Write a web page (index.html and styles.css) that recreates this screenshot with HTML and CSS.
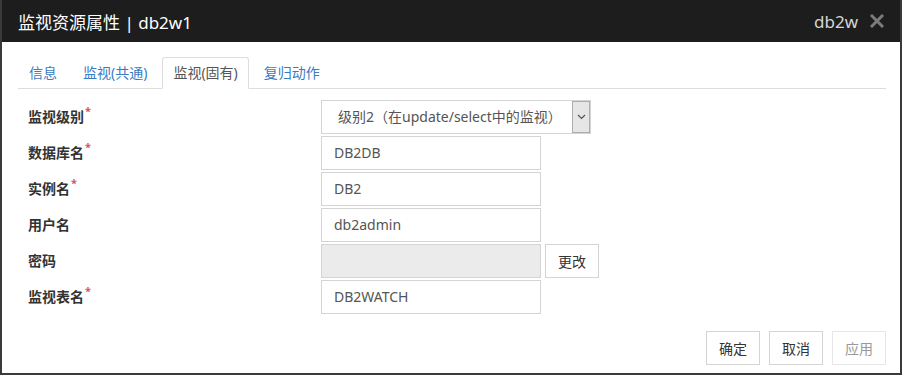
FILE: index.html
```html
<!DOCTYPE html>
<html lang="zh-CN">
<head>
    <meta charset="UTF-8">
    <title>监视资源属性</title>
    <link rel="stylesheet" href="styles.css">
</head>
<body>
    <div class="dialog">
        <div class="dialog-header">
            <div class="dialog-title">监视资源属性 | db2w1</div>
            <div class="dialog-tools">
                <span class="type-name">db2w</span>
                <svg class="close-icon" width="14" height="14" viewBox="0 0 14 14">
                    <path d="M2 2 L12 12 M12 2 L2 12" stroke="#7b7b7b" stroke-width="3" stroke-linecap="square"/>
                </svg>
            </div>
        </div>

        <div class="dialog-body">
            <ul class="tabs">
                <li class="tab">信息</li>
                <li class="tab">监视(共通)</li>
                <li class="tab active">监视(固有)</li>
                <li class="tab">复归动作</li>
            </ul>

            <div class="form">
                <div class="row">
                    <label class="label">监视级别<span class="req">*</span></label>
                    <div class="select">
                        <span class="select-text">级别2（在update/select中的监视）</span>
                        <span class="select-arrow">
                            <svg width="9" height="6" viewBox="0 0 9 6">
                                <path d="M1 1 L4.5 4.5 L8 1" fill="none" stroke="#555" stroke-width="1.2"/>
                            </svg>
                        </span>
                    </div>
                </div>
                <div class="row">
                    <label class="label">数据库名<span class="req">*</span></label>
                    <div class="input">DB2DB</div>
                </div>
                <div class="row">
                    <label class="label">实例名<span class="req">*</span></label>
                    <div class="input">DB2</div>
                </div>
                <div class="row">
                    <label class="label">用户名</label>
                    <div class="input">db2admin</div>
                </div>
                <div class="row">
                    <label class="label">密码</label>
                    <div class="input disabled"></div>
                    <button class="btn btn-small">更改</button>
                </div>
                <div class="row">
                    <label class="label">监视表名<span class="req">*</span></label>
                    <div class="input">DB2WATCH</div>
                </div>
            </div>

            <div class="footer">
                <button class="btn">确定</button>
                <button class="btn">取消</button>
                <button class="btn" disabled>应用</button>
            </div>
        </div>
    </div>
</body>
</html>
```

FILE: styles.css
```css
body {
    margin: 0;
    background: #fff;
    font-family: "Noto Sans", "Noto Sans CJK SC", sans-serif;
    color: #333;
}

.dialog {
    width: 898px;
    height: 373px;
    border: 2px solid #3a3a3a;
    border-top: none;
    background: #fff;
}

.dialog-header {
    height: 42px;
    background-color: #1d1d1d;
    display: flex;
    align-items: center;
    justify-content: space-between;
    padding: 0 16px 0 16px;
}

.dialog-title {
    color: #fff;
    font-size: 17px;
}

.dialog-tools {
    display: flex;
    align-items: center;
    gap: 12px;
}

.type-name {
    color: #d6d6d6;
    font-size: 17px;
}

.close-icon {
    display: block;
}

.dialog-body {
    padding: 15px 14px 0 16px;
}

.tabs {
    list-style: none;
    margin: 0;
    padding: 0;
    display: flex;
    border-bottom: 1px solid #ddd;
}

.tab {
    height: 31px;
    line-height: 30px;
    padding: 0 10px;
    margin-right: 4px;
    margin-bottom: -1px;
    font-size: 14px;
    color: #3a7bbf;
    border: 1px solid transparent;
    border-radius: 3px 3px 0 0;
    box-sizing: border-box;
}

.tab.active {
    color: #555;
    border-color: #ddd;
    border-bottom-color: #fff;
    background: #fff;
    height: 32px;
}

.form {
    padding: 10px 0 0 10px;
}

.row {
    display: flex;
    align-items: center;
    height: 36px;
}

.label {
    width: 293px;
    padding-bottom: 3px;
    font-size: 14px;
    font-weight: bold;
    color: #333;
}

.req {
    color: #d9534f;
    font-size: 11px;
    vertical-align: top;
    position: relative;
    top: -3px;
    margin-left: 1px;
}

.input {
    width: 220px;
    height: 34px;
    box-sizing: border-box;
    border: 1px solid #d4d4d4;
    padding: 0 12px;
    line-height: 31px;
    font-size: 14px;
    color: #555;
}

.input.disabled {
    background-color: #ebebeb;
}

.select {
    width: 270px;
    height: 34px;
    box-sizing: border-box;
    border: 1px solid #d4d4d4;
    display: flex;
    align-items: stretch;
    font-size: 14px;
    color: #555;
}

.select-text {
    flex: 1;
    padding-left: 16px;
    line-height: 31px;
    white-space: nowrap;
}

.select-arrow {
    width: 16px;
    background: #e6e6e6;
    border: 1px solid #adadad;
    display: flex;
    align-items: center;
    justify-content: center;
}

.btn {
    width: 54px;
    height: 34px;
    background: #fff;
    border: 1px solid #d4d4d4;
    font-family: inherit;
    font-size: 14px;
    color: #333;
    padding: 0;
}

.btn-small {
    margin-left: 4px;
}

.btn:disabled {
    color: #999;
    border-color: #e6e6e6;
}

.footer {
    display: flex;
    justify-content: flex-end;
    gap: 9px;
    margin-top: 16px;
}
```
